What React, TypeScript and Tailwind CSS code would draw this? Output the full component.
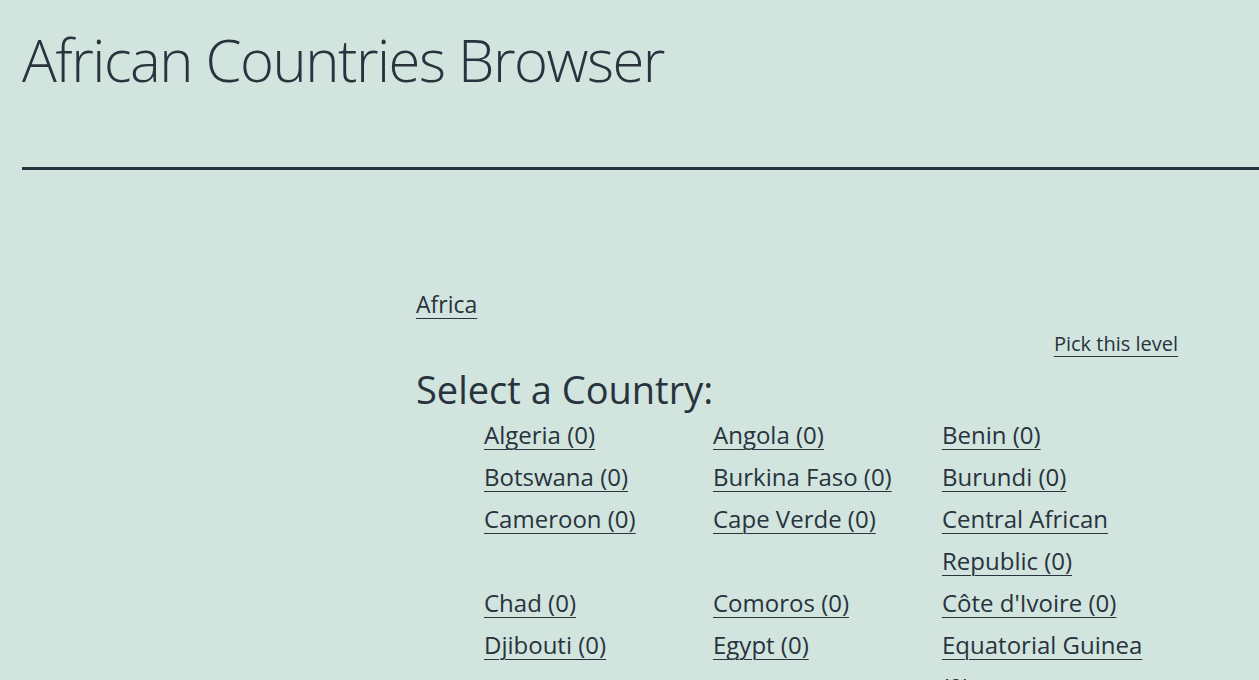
import React from 'react';

const countries = [
  'Algeria (0)', 'Angola (0)', 'Benin (0)',
  'Botswana (0)', 'Burkina Faso (0)', 'Burundi (0)',
  'Cameroon (0)', 'Cape Verde (0)', 'Central African Republic (0)',
  'Chad (0)', 'Comoros (0)', "Côte d'Ivoire (0)",
  'Djibouti (0)', 'Egypt (0)', 'Equatorial Guinea (0)',
  'Eritrea (0)', 'Ethiopia (0)', 'Gabon (0)',
];

const App: React.FC = () => {
  return (
    <div className="min-h-screen bg-[#d1e4de] text-[#28333d]" style={{ fontFamily: '"Open Sans", "Noto Sans", sans-serif' }}>
      <header className="pl-[22px] pt-[20px]">
        <h1 className="text-[58px] font-light leading-[80px] tracking-[-1.5px]">African Countries Browser</h1>
        <div className="mt-[67px] h-[3px] bg-[#28333d]" />
      </header>

      <main className="ml-[416px] mr-[81px] pt-[118px]">
        <nav className="text-[23px] leading-[32px]">
          <a href="#" className="underline underline-offset-[5px] decoration-1">Africa</a>
        </nav>

        <div className="mt-[10px] flex justify-end text-[20px] leading-[28px]">
          <a href="#" className="underline underline-offset-[5px] decoration-1">Pick this level</a>
        </div>

        <h2 className="mt-[6px] text-[38px] leading-[50px]">Select a Country:</h2>

        <ul className="ml-[68px] grid grid-cols-[229px_229px_229px]">
          {countries.map(c => (
            <li key={c} className="text-[24px] leading-[42px] pr-[20px]">
              <a href="#" className="underline underline-offset-[5px] decoration-1">{c}</a>
            </li>
          ))}
        </ul>
      </main>
    </div>
  );
};

export default App;
